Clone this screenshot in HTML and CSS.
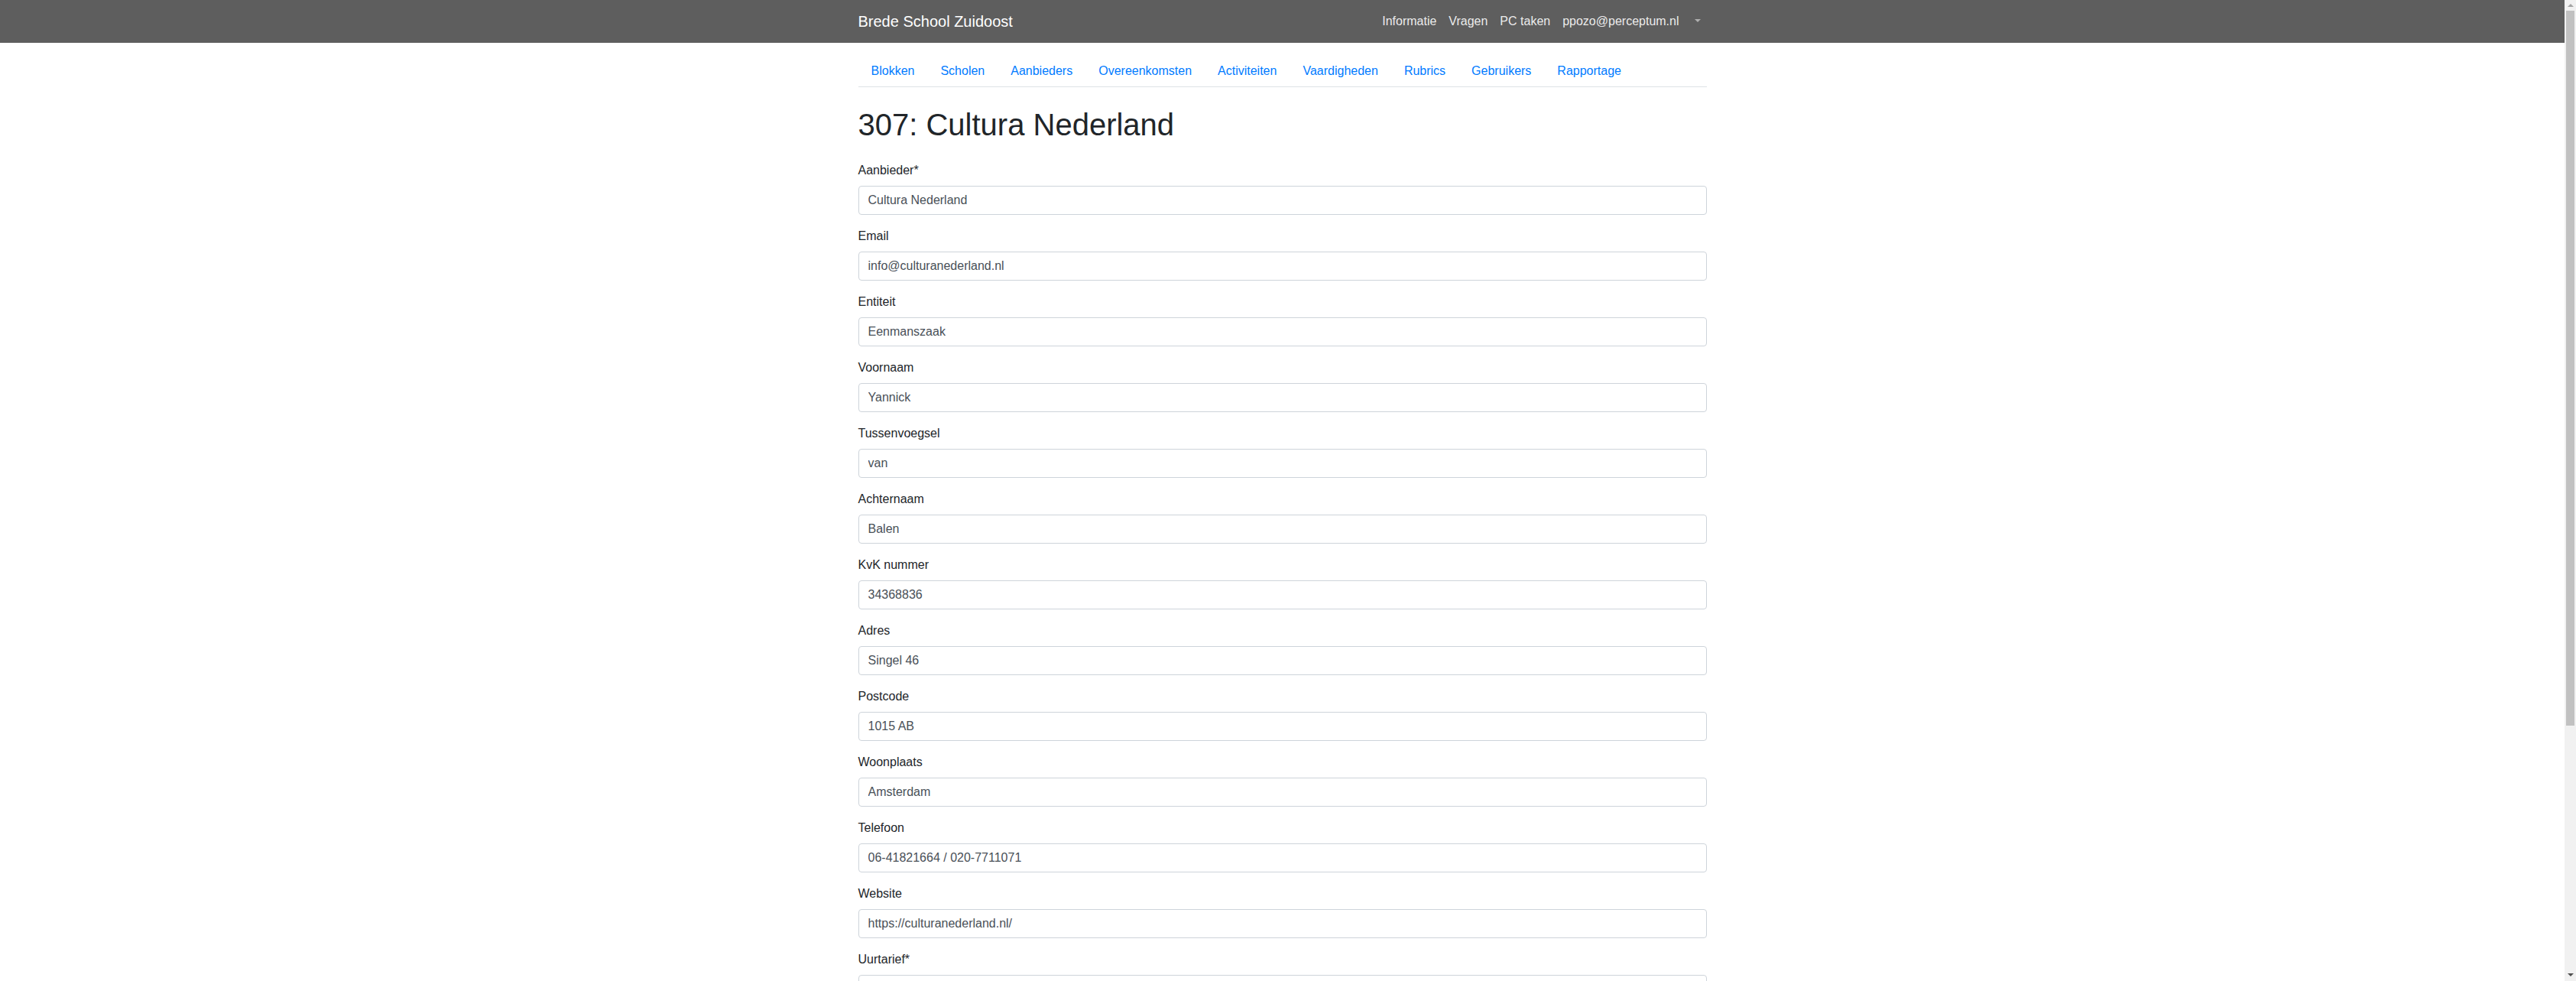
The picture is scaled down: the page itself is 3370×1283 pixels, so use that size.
FILE: index.html
```html
<!DOCTYPE html>
<html lang="nl">
<head>
<meta charset="utf-8">
<title>307: Cultura Nederland</title>
<link rel="stylesheet" href="styles.css">
</head>
<body>
<nav class="navbar">
  <div class="container navbar-inner">
    <a class="brand" href="#">Brede School Zuidoost</a>
    <ul class="topnav">
      <li><a class="toplink" href="#">Informatie</a></li>
      <li><a class="toplink" href="#">Vragen</a></li>
      <li><a class="toplink" href="#">PC taken</a></li>
      <li><a class="toplink" href="#">ppozo@perceptum.nl</a></li>
      <li><a class="toplink dropdown-toggle" href="#"></a></li>
    </ul>
  </div>
</nav>
<main class="container">
  <ul class="tabs">
    <li><a class="tab" href="#">Blokken</a></li>
    <li><a class="tab" href="#">Scholen</a></li>
    <li><a class="tab" href="#">Aanbieders</a></li>
    <li><a class="tab" href="#">Overeenkomsten</a></li>
    <li><a class="tab" href="#">Activiteiten</a></li>
    <li><a class="tab" href="#">Vaardigheden</a></li>
    <li><a class="tab" href="#">Rubrics</a></li>
    <li><a class="tab" href="#">Gebruikers</a></li>
    <li><a class="tab" href="#">Rapportage</a></li>
  </ul>
  <h1 class="title">307: Cultura Nederland</h1>
  <form class="form">
    <div class="group"><label class="label">Aanbieder*</label><input class="input" type="text" value="Cultura Nederland"></div>
    <div class="group"><label class="label">Email</label><input class="input" type="text" value="info@culturanederland.nl"></div>
    <div class="group"><label class="label">Entiteit</label><input class="input" type="text" value="Eenmanszaak"></div>
    <div class="group"><label class="label">Voornaam</label><input class="input" type="text" value="Yannick"></div>
    <div class="group"><label class="label">Tussenvoegsel</label><input class="input" type="text" value="van"></div>
    <div class="group"><label class="label">Achternaam</label><input class="input" type="text" value="Balen"></div>
    <div class="group"><label class="label">KvK nummer</label><input class="input" type="text" value="34368836"></div>
    <div class="group"><label class="label">Adres</label><input class="input" type="text" value="Singel 46"></div>
    <div class="group"><label class="label">Postcode</label><input class="input" type="text" value="1015 AB"></div>
    <div class="group"><label class="label">Woonplaats</label><input class="input" type="text" value="Amsterdam"></div>
    <div class="group"><label class="label">Telefoon</label><input class="input" type="text" value="06-41821664 / 020-7711071"></div>
    <div class="group"><label class="label">Website</label><input class="input" type="text" value="https://culturanederland.nl/"></div>
    <div class="group"><label class="label">Uurtarief*</label><input class="input" type="text" value=""></div>
  </form>
</main>
<div class="scrollbar" aria-hidden="true">
  <div class="sb-up"></div>
  <div class="sb-thumb"></div>
  <div class="sb-down"></div>
</div>
</body>
</html>
```

FILE: styles.css
```css
* { box-sizing: border-box; }
html, body { margin: 0; padding: 0; }
html { height: 100%; overflow: hidden; }
body {
  height: 100%;
  overflow: hidden;
  padding-right: 15px;
  font-family: "Liberation Sans", Arial, sans-serif;
  font-size: 16px;
  line-height: 1.5;
  color: #212529;
  background: #fff;
}
a { text-decoration: none; }
ul { list-style: none; margin: 0; padding: 0; }
.container {
  width: 100%;
  max-width: 1140px;
  padding: 0 15px;
  margin: 0 auto;
}
.navbar {
  background: #5e5e5e;
  padding: 8px 0;
}
.navbar-inner {
  display: flex;
  align-items: center;
  justify-content: space-between;
  height: 40px;
}
.brand {
  color: #fff;
  font-size: 20px;
  line-height: 30px;
  padding: 5px 0;
}
.topnav { display: flex; align-items: center; }
.toplink {
  display: block;
  color: rgba(255,255,255,0.9);
  padding: 8px;
  line-height: 24px;
}
.dropdown-toggle { color: rgba(255,255,255,0.5); }
.dropdown-toggle::after {
  content: "";
  display: inline-block;
  margin-left: 4px;
  vertical-align: 3.8px;
  border-top: 4.8px solid;
  border-left: 4.8px solid transparent;
  border-right: 4.8px solid transparent;
  border-bottom: 0;
}
.tabs {
  display: flex;
  margin-top: 16px;
  border-bottom: 1px solid #dee2e6;
}
.tab {
  display: block;
  padding: 8px 16px;
  line-height: 24px;
  color: #007bff;
  border: 1px solid transparent;
  margin-bottom: -1px;
}
.title {
  font-size: 40px;
  font-weight: 500;
  line-height: 1.2;
  margin: 25px 0 24px;
}
.group { margin-bottom: 16px; }
.label {
  display: block;
  margin-bottom: 8px;
  line-height: 24px;
}
.input {
  display: block;
  width: 100%;
  height: 38px;
  padding: 6px 12px;
  font-family: "Liberation Sans", Arial, sans-serif;
  font-size: 16px;
  line-height: 24px;
  color: #495057;
  background: #fff;
  border: 1px solid #ced4da;
  border-radius: 4px;
}
.scrollbar {
  position: fixed;
  top: 0;
  right: 0;
  width: 15px;
  height: 100vh;
  background: #f1f1f1;
  display: flex;
  flex-direction: column;
  align-items: center;
}
.sb-up {
  width: 0;
  height: 0;
  margin-top: 5px;
  margin-bottom: 5px;
  border-left: 4px solid transparent;
  border-right: 4px solid transparent;
  border-bottom: 4px solid #a3a3a3;
}
.sb-thumb {
  width: 11px;
  height: 935px;
  background: #c1c1c1;
}
.sb-down {
  width: 0;
  height: 0;
  margin-top: auto;
  margin-bottom: 6px;
  border-left: 4px solid transparent;
  border-right: 4px solid transparent;
  border-top: 4px solid #505050;
}
```
